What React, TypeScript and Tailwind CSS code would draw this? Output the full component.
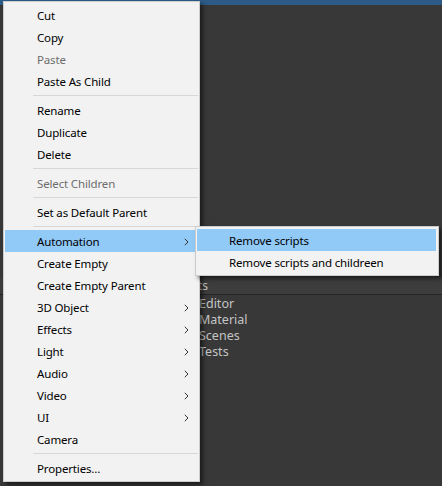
import React from "react";

type Item =
  | { kind: "item"; label: string; disabled?: boolean; sub?: boolean; active?: boolean }
  | { kind: "sep" };

const items: Item[] = [
  { kind: "item", label: "Cut" },
  { kind: "item", label: "Copy" },
  { kind: "item", label: "Paste", disabled: true },
  { kind: "item", label: "Paste As Child" },
  { kind: "sep" },
  { kind: "item", label: "Rename" },
  { kind: "item", label: "Duplicate" },
  { kind: "item", label: "Delete" },
  { kind: "sep" },
  { kind: "item", label: "Select Children", disabled: true },
  { kind: "sep" },
  { kind: "item", label: "Set as Default Parent" },
  { kind: "sep" },
  { kind: "item", label: "Automation", sub: true, active: true },
  { kind: "item", label: "Create Empty" },
  { kind: "item", label: "Create Empty Parent" },
  { kind: "item", label: "3D Object", sub: true },
  { kind: "item", label: "Effects", sub: true },
  { kind: "item", label: "Light", sub: true },
  { kind: "item", label: "Audio", sub: true },
  { kind: "item", label: "Video", sub: true },
  { kind: "item", label: "UI", sub: true },
  { kind: "item", label: "Camera" },
  { kind: "sep" },
  { kind: "item", label: "Properties..." },
];

const folders = ["Editor", "Material", "Scenes", "Tests"];

const Chevron = () => (
  <svg width="5" height="8" viewBox="0 0 5 8" className="absolute right-[9px] top-[8px]">
    <path d="M0.8 0.8L4 4L0.8 7.2" fill="none" stroke="#333333" strokeWidth="1" />
  </svg>
);

const App = () => {
  return (
    <div
      className="relative w-[442px] h-[486px] overflow-hidden bg-[#383838] flex flex-col"
      style={{ fontFamily: '"Segoe UI", "Noto Sans", sans-serif' }}
    >
      {/* editor background */}
      <div className="h-[5px] bg-[#2c5b87]" />
      <div className="h-[272px] bg-[#383838]" />
      <div className="h-[18px] bg-[#3d3d3d] border-b border-[#252525] flex items-center pl-[172px] text-[12px] leading-[16px] text-[#c8c8c8]">
        Assets
      </div>
      <div className="flex flex-col pt-[1px]">
        {folders.map((f) => (
          <div key={f} className="h-[16px] flex items-center pl-[199px] text-[12.5px] leading-[16px] text-[#c4c4c4]">
            {f}
          </div>
        ))}
      </div>

      {/* context menu */}
      <div className="absolute left-[3px] top-[1px] w-[197px] bg-[#f2f2f2] border border-[#cccccc] pt-[2px] pb-[2px] shadow-[3px_3px_4px_rgba(0,0,0,0.5)] text-[11.5px] tracking-[-0.15px]">
        {items.map((it, i) =>
          it.kind === "sep" ? (
            <div key={i} className="h-[7px] flex items-center pl-[29px] pr-[1px]">
              <div className="h-px w-full bg-[#d7d7d7]" />
            </div>
          ) : (
            <div
              key={i}
              className={
                "relative h-[22px] ml-[1px] mr-[1px] pl-[32px] pt-[1px] flex items-center " +
                (it.active ? "bg-[#91c9f7] " : "") +
                (it.disabled ? "text-[#6d6d6d]" : "text-black")
              }
            >
              {it.label}
              {it.sub ? <Chevron /> : null}
            </div>
          )
        )}
      </div>

      {/* automation submenu */}
      <div className="absolute left-[195px] top-[226px] w-[244px] bg-[#f2f2f2] border border-[#cccccc] pt-[2px] pb-[2px] shadow-[3px_3px_4px_rgba(0,0,0,0.5)] text-[11.5px] tracking-[-0.15px] text-black">
        <div className="h-[22px] ml-[1px] mr-[2px] pl-[32px] pt-[1px] flex items-center bg-[#91c9f7]">Remove scripts</div>
        <div className="h-[22px] ml-[1px] mr-[2px] pl-[32px] pt-[1px] flex items-center">Remove scripts and childreen</div>
      </div>
    </div>
  );
};

export default App;
